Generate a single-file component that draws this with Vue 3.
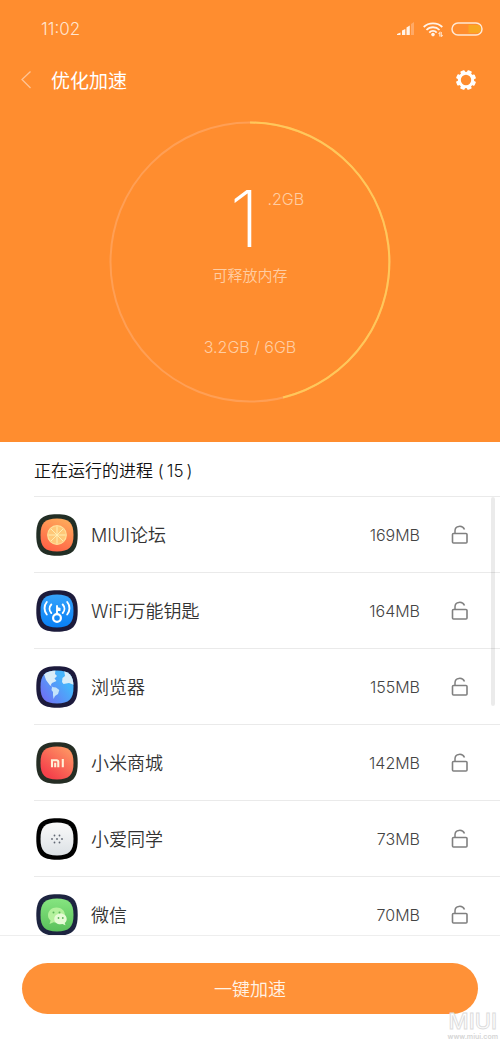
<script setup>
const processes = [
  { id: 'forum', name: 'MIUI论坛', size: '169MB' },
  { id: 'wifi', name: 'WiFi万能钥匙', size: '164MB' },
  { id: 'browser', name: '浏览器', size: '155MB' },
  { id: 'store', name: '小米商城', size: '142MB' },
  { id: 'assistant', name: '小爱同学', size: '73MB' },
  { id: 'wechat', name: '微信', size: '70MB' }
]
const squircle = 'M21 0.300C36.500 0.300 41.700 5.500 41.700 21S36.500 41.700 21 41.700 0.300 36.500 0.300 21 5.500 0.300 21 0.300Z'
const inner = 'M21 4.500C33 4.500 37.500 9 37.500 21S33 37.500 21 37.500 4.500 33 4.500 21 9 4.500 21 4.500Z'
const rims = { forum: '#222e25', wifi: '#1c1b3b', browser: '#1c1a3c', store: '#252d24', assistant: '#000', wechat: '#1d2440' }
</script>

<template>
  <div class="page">
    <section class="hero">
      <div class="status">
        <time>11:02</time>
        <div class="indicators">
          <svg class="signal" viewBox="0 0 18 14" aria-hidden="true">
            <path d="M0 13V12L3.500 10.500V13ZM5 13V8.500L8.300 7V13ZM9.500 13V5.500L12.800 3.500V13Z" fill="#fff3e8" />
            <path d="M14 13V2L17 0V13Z" fill="#ffa966" />
          </svg>
          <svg class="wifi" viewBox="0 0 20 15" aria-hidden="true">
            <g fill="none" stroke="#fff3e8" stroke-width="1.800">
              <path d="M0.700 5C5.500 0.200 14.500 0.200 19.300 5" />
              <path d="M3.500 8C7 4.300 13 4.300 16.500 8" />
              <path d="M6.300 10.700C8.300 8.300 11.700 8.300 13.700 10.700" />
            </g>
            <circle cx="10" cy="12.600" r="1.800" fill="#fff3e8" />
            <path d="M16.800 14.500V10.500L15.500 12M18.300 10V14.500L19.600 13" fill="none" stroke="#ffe0c4" stroke-width="1.100" />
          </svg>
          <svg class="battery" viewBox="0 0 32 14" aria-hidden="true">
            <rect x="1" y="1" width="30" height="12" rx="6" fill="none" stroke="#ffe8d5" stroke-width="1.500" />
            <path d="M17.500 3H26a4 4 0 0 1 0 8H17.500Z" fill="#f8a722" />
          </svg>
        </div>
      </div>
      <header class="bar">
        <button class="back" type="button" aria-label="返回">
          <svg viewBox="0 0 12 20"><path d="M10.500 1.500L2 9.500L10.500 18" fill="none" stroke="#ffc394" stroke-width="1.300" /></svg>
        </button>
        <h1>优化加速</h1>
        <button class="settings" type="button" aria-label="设置">
          <svg viewBox="0 0 20 20">
            <circle cx="10" cy="10" r="6.700" fill="none" stroke="#fff" stroke-width="3" />
            <g fill="#fff">
              <rect v-for="n in 8" :key="n" x="7.700" y="0" width="4.600" height="3.500" rx="1" :transform="`rotate(${n * 45 - 22} 10 10)`" />
            </g>
          </svg>
        </button>
      </header>
      <div class="gauge">
        <svg class="ring" viewBox="0 0 282 282" aria-hidden="true">
          <circle cx="141" cy="141" r="139.500" fill="none" stroke="#ff9f55" stroke-width="2" />
          <path d="M141 1.500A139.500 139.500 0 0 1 174 276.500" fill="none" stroke="#ffc85a" stroke-width="2" />
        </svg>
        <p class="amount"><span class="whole">1</span><span class="rest">.2GB</span></p>
        <p class="caption">可释放内存</p>
        <p class="usage">3.2GB / 6GB</p>
      </div>
    </section>

    <main class="content">
      <h2>正在运行的进程 (<span>15</span>)</h2>
      <div class="list">
        <ul>
          <li v-for="p in processes" :key="p.id">
            <svg class="app-icon" viewBox="0 0 42 42" aria-hidden="true">
              <defs>
                <linearGradient id="g-forum" x1="0.700" y1="0" x2="0.300" y2="1"><stop offset="0" stop-color="#ffaa5a" /><stop offset="1" stop-color="#ff6046" /></linearGradient>
                <linearGradient id="g-wifi" x1="0" y1="0" x2="0" y2="1"><stop offset="0" stop-color="#36a3fb" /><stop offset="1" stop-color="#087ff5" /></linearGradient>
                <linearGradient id="g-browser" x1="0.800" y1="0.400" x2="0" y2="1"><stop offset="0" stop-color="#45b4fc" /><stop offset="1" stop-color="#7565f2" /></linearGradient>
                <linearGradient id="g-store" x1="1" y1="0" x2="0.300" y2="0.900"><stop offset="0" stop-color="#ffa267" /><stop offset="1" stop-color="#f5424b" /></linearGradient>
                <linearGradient id="g-assistant" x1="0" y1="0" x2="0" y2="1"><stop offset="0" stop-color="#fafafa" /><stop offset="1" stop-color="#dce1e5" /></linearGradient>
                <linearGradient id="g-wechat" x1="0" y1="0" x2="0" y2="1"><stop offset="0" stop-color="#86e580" /><stop offset="1" stop-color="#5ac05b" /></linearGradient>
                <clipPath id="inner-clip"><path :d="inner" /></clipPath>
              </defs>
              <path :d="squircle" :fill="rims[p.id]" />
              <path :d="inner" :fill="`url(#g-${p.id})`" />
              <g v-if="p.id === 'forum'">
                <circle cx="21" cy="21" r="9.300" fill="#ffc878" stroke="#ffe09a" stroke-width="1.200" />
                <path d="M21 12.500V29.500M12.500 21H29.500M15 15L27 27M27 15L15 27" stroke="#fff0b8" stroke-width="0.900" />
              </g>
              <g v-else-if="p.id === 'wifi'" fill="none" stroke="#fff" stroke-width="1.900" stroke-linecap="round">
                <circle cx="21" cy="28" r="3.900" stroke-width="2.200" />
                <path d="M21 23.500V16" />
                <path d="M21 17L24.500 18V21H21Z" fill="#fff" stroke="none" />
                <path d="M15.300 14.500C13 17 13 20.500 15.300 23M10.800 12C7.800 15.500 7.800 21 10.800 24.500M26.700 14.500C29 17 29 20.500 26.700 23M31.200 12C34.200 15.500 34.200 21 31.200 24.500" />
              </g>
              <g v-else-if="p.id === 'browser'" clip-path="url(#inner-clip)" fill="#d9edf9">
                <path d="M8 8L14 4H19.500L19 8L21 10L18.500 12.500L20.500 15L16 17L14.500 19.500L17.500 20.500L14.500 20L10 14Z" />
                <path d="M28 4H38V19L33 17L27.500 18L26 16L26.500 12L29 10Z" />
                <path d="M16 21L20 21.500L23.300 24L22 28L19 30L17.500 33L17 29L17 26L15.500 24Z" fill="#c4e3fb" />
              </g>
              <path v-else-if="p.id === 'store'" d="M16 25.200V18.200H20.500Q22.300 18.200 22.300 20V25.200M19.200 20.800V25.200M26.800 17V25.200" fill="none" stroke="#fff1d8" stroke-width="2.100" />
              <g v-else-if="p.id === 'assistant'" fill="#616873">
                <circle v-for="d in [[18.500,17.500],[23.500,17.500],[16,21],[21,21],[26,21],[18.500,24.500],[23.500,24.500]]" :key="d.join()" :cx="d[0]" :cy="d[1]" r="0.900" />
              </g>
              <g v-else>
                <path d="M20.500 13.500C15.500 13.500 12 17 12 21.200C12 23.500 13 25.300 14.600 26.600L13.500 30L17.600 28.200C18.500 28.500 19.500 28.700 20.500 28.700C25.500 28.700 29 25.500 29 21.200S25.500 13.500 20.500 13.500Z" fill="#b4f19c" />
                <path d="M24.500 19.500C21 19.500 18.300 21.800 18.300 25S21 30.300 24.500 30.300L26.500 30L29.500 31.300L28.700 29C30 28 30.700 26.600 30.700 25C30.700 21.800 28 19.500 24.500 19.500Z" fill="#e6fbd6" />
                <g fill="#5db65a"><circle cx="17.500" cy="18.500" r="1" /><circle cx="23.500" cy="18.500" r="1" /><circle cx="22.500" cy="24" r="0.900" /><circle cx="26.800" cy="24" r="0.900" /></g>
              </g>
            </svg>
            <span class="name">{{ p.name }}</span>
            <span class="size">{{ p.size }}</span>
            <button class="lock" type="button" :aria-label="`锁定 ${p.name}`">
              <svg viewBox="0 0 18 20">
                <rect x="1.500" y="8.500" width="14.500" height="9.500" rx="1" fill="none" stroke="#808080" stroke-width="1.600" />
                <path d="M4 8.500V5.700C4 0.500 11.500 -0.200 13.500 4.500" fill="none" stroke="#808080" stroke-width="1.500" />
              </svg>
            </button>
          </li>
        </ul>
        <div class="scrollbar"></div>
      </div>
    </main>

    <footer class="footer">
      <button class="boost" type="button">一键加速</button>
      <div class="watermark"><b>MIUI</b><small>www.miui.com</small></div>
    </footer>
  </div>
</template>

<style>
body { margin: 0; background: #fff; }
</style>

<style scoped>
* { box-sizing: border-box; }
.page {
  display: flex;
  flex-direction: column;
  height: 100vh;
  color: #333;
  background: #fff;
  font-family: Inter, "Noto Sans CJK SC", sans-serif;
  font-weight: 350;
}
h1, h2, p, ul { margin: 0; padding: 0; }
button { border: 0; padding: 0; background: none; font: inherit; cursor: pointer; }
svg { display: block; }
.hero {
  flex: none;
  padding-bottom: 39px;
  background: #ff8d2f;
  color: #fff;
}
.status {
  display: flex;
  justify-content: space-between;
  align-items: center;
  height: 56px;
  padding: 2px 17px 0 41px;
  color: #ffe5d0;
  font-size: 17px;
}
.indicators { display: flex; align-items: center; gap: 8px; }
.signal { width: 18px; height: 14px; }
.wifi { width: 20px; height: 15px; }
.battery { width: 32px; height: 14px; }
.bar {
  display: flex;
  align-items: center;
  height: 48px;
  padding: 0 24px 0 20px;
}
.back { width: 12px; }
.back svg { width: 12px; height: 20px; }
h1 {
  flex: 1;
  margin-left: 19px;
  padding-top: 3px;
  font-size: 19px;
  line-height: 28px;
  font-weight: 400;
}
.settings svg { width: 20px; height: 20px; }
.gauge {
  position: relative;
  width: 282px;
  height: 282px;
  margin: 17px auto 0;
  padding-top: 59px;
  text-align: center;
  color: #ffcda3;
  font-size: 16px;
  font-weight: 300;
}
.ring { position: absolute; inset: 0; width: 100%; height: 100%; }
.amount {
  display: flex;
  justify-content: center;
  align-items: flex-start;
  height: 84px;
  padding-left: 34px;
}
.whole { color: #fff; font-size: 78px; font-weight: 200; line-height: 78px; }
.rest { margin: 9px 0 0 8px; line-height: 20px; }
.caption { font-size: 15px; line-height: 24px; font-weight: 350; }
.usage { margin-top: 47px; line-height: 24px; }
.content { flex: 1; min-height: 0; display: flex; flex-direction: column; }
h2 {
  flex: none;
  height: 54px;
  padding: 1px 0 0 34px;
  font-size: 17px;
  line-height: 56px;
  font-weight: 350;
  color: #111;
}
h2 span { margin: 0 3px; }
.list { position: relative; flex: 1; min-height: 0; overflow: hidden; }
ul { list-style: none; padding-left: 34px; }
li {
  display: flex;
  align-items: center;
  height: 76px;
  padding: 0 31px 0 2px;
  border-top: 1px solid #eaeaea;
}
.app-icon { width: 42px; height: 42px; }
.name { flex: 1; margin-left: 13px; padding-bottom: 2px; font-size: 18px; color: #333; }
.size { font-size: 16px; font-weight: 300; color: #444; }
.lock { margin-left: 31px; }
.lock svg { width: 18px; height: 20px; }
.scrollbar {
  position: absolute;
  top: 1px;
  right: 5px;
  width: 4px;
  height: 209px;
  border-radius: 2px;
  background: rgba(0, 0, 0, 0.08);
}
.footer {
  position: relative;
  flex: none;
  padding: 27px 22px;
  border-top: 1px solid #eee;
}
.boost {
  display: block;
  width: 100%;
  height: 51px;
  padding-bottom: 2px;
  border-radius: 26px;
  background: #ff9137;
  color: #fff3e6;
  font-size: 18px;
}
.watermark {
  position: absolute;
  right: 2px;
  bottom: 0;
  display: flex;
  flex-direction: column;
  align-items: center;
  color: #fff;
}
.watermark b {
  font-size: 22px;
  line-height: 24px;
  font-weight: 500;
  -webkit-text-stroke: 1px #ddd;
}
.watermark small {
  font-size: 7px;
  line-height: 8px;
  font-weight: 600;
  color: #d5d5d5;
}
</style>
